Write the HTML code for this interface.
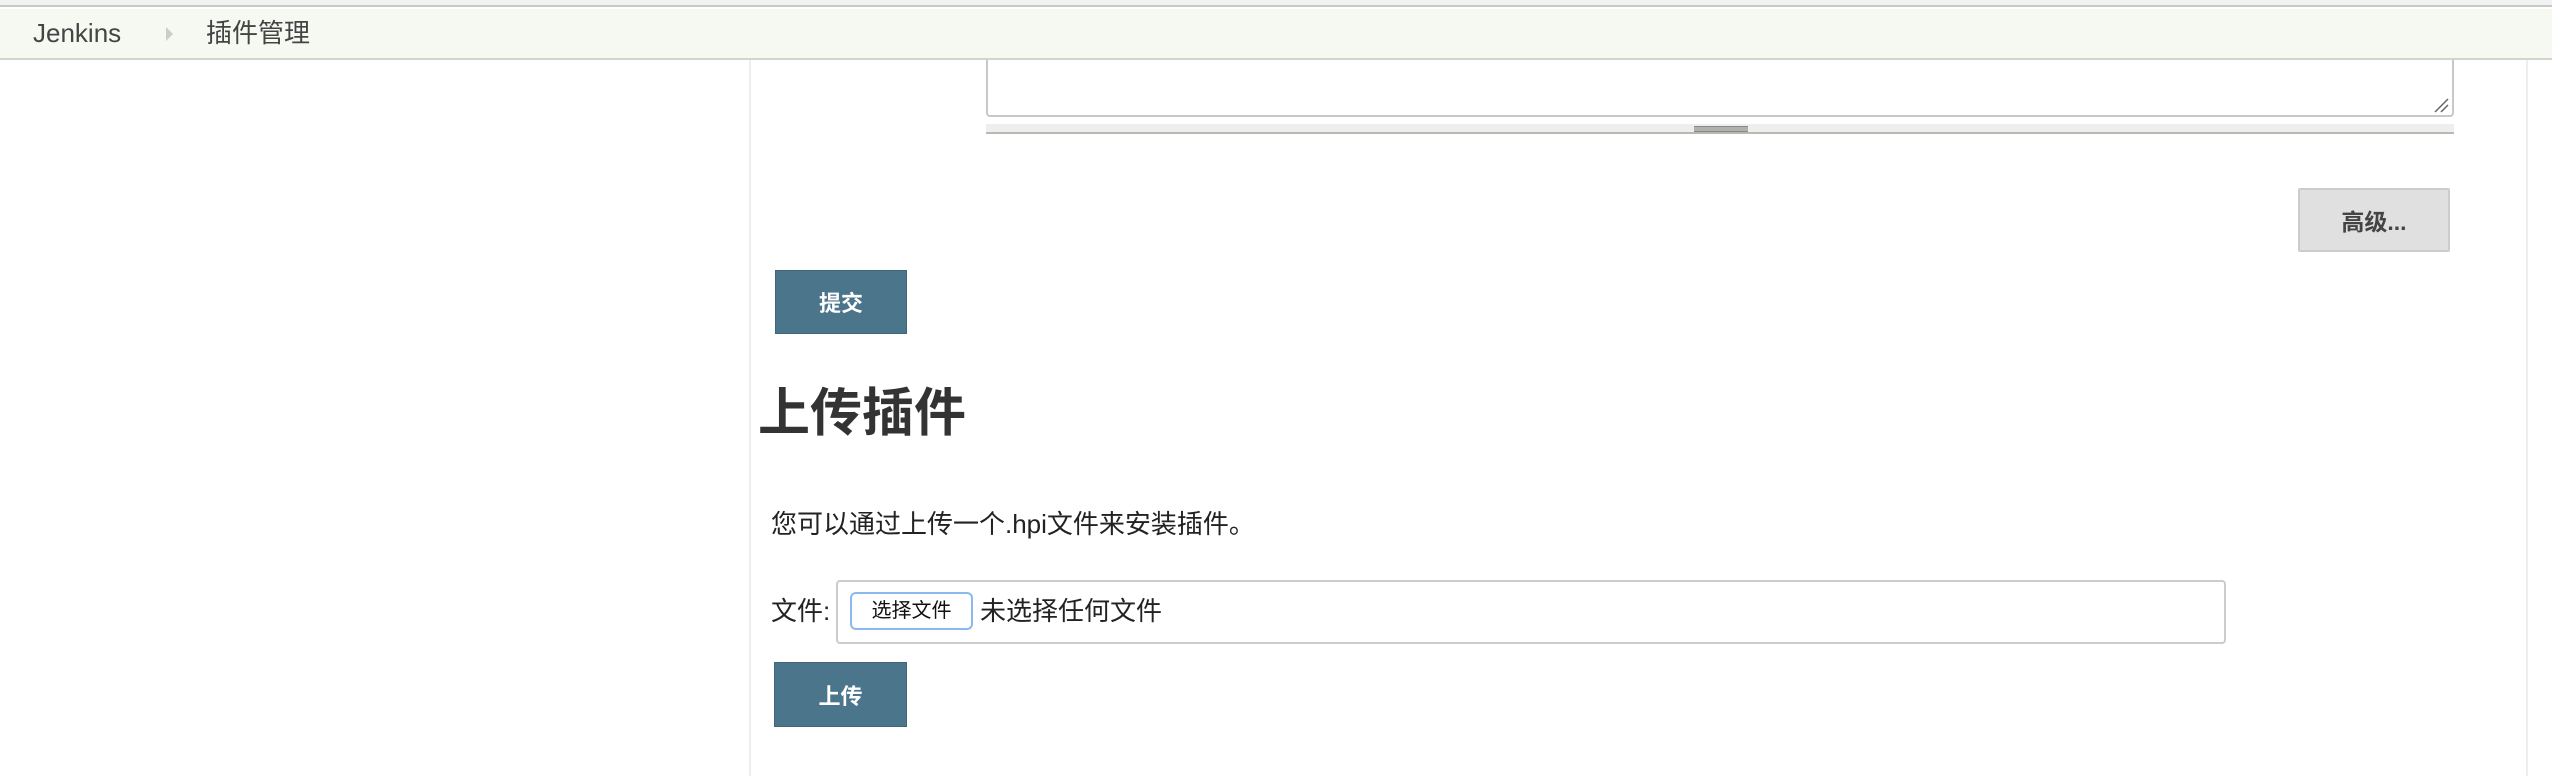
<!DOCTYPE html>
<html><head><meta charset="utf-8"><style>
*{margin:0;padding:0;box-sizing:border-box}
html,body{width:2552px;height:776px;overflow:hidden;background:#fff;font-family:"Liberation Sans","Noto Sans CJK SC",sans-serif;color:#333}
.a{position:absolute}
.btn{position:absolute;background:#4b758b;border:1px solid #3f6577;color:#fff;font-weight:bold;font-size:22px;display:flex;align-items:center;justify-content:center}
</style></head><body>
<div class="a" style="left:0;top:0;width:2552px;height:7px;background:#f2f2f2;border-bottom:2px solid #c8c8c8"></div>
<div class="a" style="left:986px;top:60px;width:1468px;height:57px;border:2px solid #c8c8c8;border-top:none;border-radius:0 0 4px 4px;background:#fff"></div>
<div class="a" style="left:0;top:9px;width:2552px;height:51px;background:#f6f8f2;border-bottom:2px solid #d3d5cc"></div>
<div class="a" style="left:33px;top:17px;font-size:26px;color:#444;line-height:32px">Jenkins</div>
<div class="a" style="left:166px;top:27px;width:0;height:0;border-top:7px solid transparent;border-bottom:7px solid transparent;border-left:7px solid #ccc"></div>
<div class="a" style="left:206px;top:17px;font-size:26px;color:#444;line-height:32px">插件管理</div>
<div class="a" style="left:749px;top:60px;width:2px;height:716px;background:#eee"></div>
<div class="a" style="left:2526px;top:60px;width:2px;height:716px;background:#eee"></div>
<svg class="a" style="left:2434px;top:98px" width="16" height="16"><path d="M1 14L14 1M7 14L14 7" stroke="#666" stroke-width="1.5"/></svg>
<div class="a" style="left:986px;top:124px;width:1468px;height:10px;background:#eee;border-bottom:2px solid #b8b9b1"></div>
<div class="a" style="left:1694px;top:126px;width:54px;height:6px;background:#b0b2ab;border-top:1px solid #888;border-bottom:1px solid #888"></div>
<div class="a" style="left:2298px;top:188px;width:152px;height:64px;background:#e0e0e0;border:2px solid #ccc;border-radius:2px;font-weight:bold;font-size:23px;color:#444;display:flex;align-items:center;justify-content:center">高级...</div>
<div class="btn" style="left:775px;top:270px;width:132px;height:64px">提交</div>
<div class="a" style="left:758px;top:384px;font-size:52px;font-weight:bold;line-height:60px;color:#333">上传插件</div>
<div class="a" style="left:771px;top:509px;font-size:26px;line-height:30px;color:#222">您可以通过上传一个.hpi文件来安装插件。</div>
<div class="a" style="left:771px;top:596px;font-size:26px;line-height:30px;color:#222">文件:</div>
<div class="a" style="left:836px;top:580px;width:1390px;height:64px;border:2px solid #ccc;border-radius:4px;background:#fff"></div>
<div class="a" style="left:850px;top:592px;width:123px;height:38px;border:2px solid #8ab8ef;border-radius:6px;background:#fff;font-size:20px;line-height:34px;text-align:center;color:#111">选择文件</div>
<div class="a" style="left:980px;top:596px;font-size:26px;line-height:30px;color:#222">未选择任何文件</div>
<div class="btn" style="left:774px;top:662px;width:133px;height:65px">上传</div>
</body></html>
